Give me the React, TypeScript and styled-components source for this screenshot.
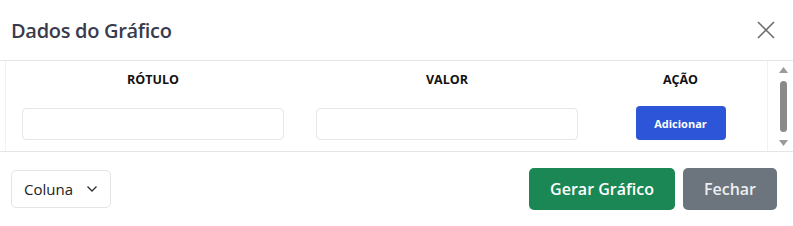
import styled, { createGlobalStyle } from 'styled-components';

const GlobalStyle = createGlobalStyle`
  html, body {
    margin: 0;
    padding: 0;
    background: #ffffff;
  }
  * {
    box-sizing: border-box;
  }
  body {
    font-family: 'Open Sans', 'Noto Sans', sans-serif;
    color: #212529;
  }
`;

const Modal = styled.div`
  width: 793px;
  height: 226px;
  display: flex;
  flex-direction: column;
  background: #fff;
`;

const Header = styled.div`
  height: 61px;
  display: flex;
  align-items: center;
  justify-content: space-between;
  padding: 0 14px 0 11px;
  border-bottom: 1px solid #e3e5e8;
`;

const Title = styled.h5`
  margin: 0;
  font-size: 20px;
  font-weight: 600;
  color: #393b4c;
  letter-spacing: -0.3px;
`;

const CloseButton = styled.button`
  width: 26px;
  height: 26px;
  border: none;
  background: transparent;
  padding: 0;
  display: flex;
  align-items: center;
  justify-content: center;
  cursor: pointer;
`;

const Body = styled.div`
  height: 91px;
  display: flex;
  padding-left: 5px;
  border-bottom: 1px solid #e3e5e8;
`;

const TableArea = styled.div`
  flex: 1;
  border-left: 1px solid #f1f2f3;
  display: grid;
  grid-template-columns: 294px 294px 1fr;
  grid-template-rows: 36px 55px;
`;

const HeadCell = styled.div`
  display: flex;
  align-items: center;
  justify-content: center;
  font-size: 12.5px;
  font-weight: 700;
  color: #111;
`;

const Cell = styled.div`
  display: flex;
  align-items: flex-start;
  justify-content: center;
  padding: 11px 16px 0 16px;
`;

const TextInput = styled.input`
  width: 100%;
  height: 32px;
  border: 1px solid #e4e6e9;
  border-radius: 4px;
  background: #fff;
  outline: none;
`;

const AddButton = styled.button`
  margin-top: -2px;
  width: 90px;
  height: 34px;
  border: none;
  border-radius: 4px;
  background: #2c55d7;
  color: #fff;
  font-family: 'Open Sans', 'Noto Sans', sans-serif;
  font-size: 11px;
  font-weight: 700;
  cursor: pointer;
`;

const ScrollTrack = styled.div`
  width: 26px;
  border-left: 1px solid #f1f2f3;
  display: flex;
  flex-direction: column;
  align-items: center;
  padding: 6px 0 5px 5px;
  gap: 4px;
`;

const Thumb = styled.div`
  width: 7px;
  flex: 1;
  margin: 4px 0;
  border-radius: 4px;
  background: #8a8a8a;
`;

const Footer = styled.div`
  flex: 1;
  display: flex;
  align-items: center;
  justify-content: space-between;
  padding: 0 16px 0 11px;
`;

const SelectBox = styled.div`
  width: 100px;
  height: 38px;
  border: 1px solid #e3e5e8;
  border-radius: 5px;
  display: flex;
  align-items: center;
  gap: 13px;
  padding-left: 12px;
  font-size: 15px;
  color: #222;
`;

const Actions = styled.div`
  display: flex;
  gap: 8px;
`;

const FooterButton = styled.button<{ $variant: 'success' | 'secondary' }>`
  height: 42px;
  padding: 0 21px;
  border: none;
  border-radius: 5px;
  background: ${({ $variant }) => ($variant === 'success' ? '#1a8754' : '#6c757d')};
  color: ${({ $variant }) => ($variant === 'success' ? '#fff' : '#eceef0')};
  font-family: 'Open Sans', 'Noto Sans', sans-serif;
  font-size: 16px;
  font-weight: 600;
  cursor: pointer;
`;

export default function App() {
  return (
    <>
      <GlobalStyle />
      <Modal>
        <Header>
          <Title>Dados do Gráfico</Title>
          <CloseButton aria-label="Fechar">
            <svg width="18" height="18" viewBox="0 0 18 18">
              <path d="M1 1L17 17M17 1L1 17" stroke="#6b6b6b" strokeWidth="1.6" fill="none" />
            </svg>
          </CloseButton>
        </Header>
        <Body>
          <TableArea>
            <HeadCell>RÓTULO</HeadCell>
            <HeadCell>VALOR</HeadCell>
            <HeadCell>AÇÃO</HeadCell>
            <Cell>
              <TextInput type="text" />
            </Cell>
            <Cell>
              <TextInput type="text" />
            </Cell>
            <Cell>
              <AddButton>Adicionar</AddButton>
            </Cell>
          </TableArea>
          <ScrollTrack>
            <svg width="9" height="6" viewBox="0 0 9 6">
              <path d="M4.5 0L9 6H0Z" fill="#9a9a9a" />
            </svg>
            <Thumb />
            <svg width="9" height="6" viewBox="0 0 9 6">
              <path d="M0 0H9L4.5 6Z" fill="#9a9a9a" />
            </svg>
          </ScrollTrack>
        </Body>
        <Footer>
          <SelectBox>
            Coluna
            <svg width="12" height="8" viewBox="0 0 12 8">
              <path d="M1.5 1.5L6 6L10.5 1.5" stroke="#333" strokeWidth="1.4" fill="none" />
            </svg>
          </SelectBox>
          <Actions>
            <FooterButton $variant="success">Gerar Gráfico</FooterButton>
            <FooterButton $variant="secondary">Fechar</FooterButton>
          </Actions>
        </Footer>
      </Modal>
    </>
  );
}
